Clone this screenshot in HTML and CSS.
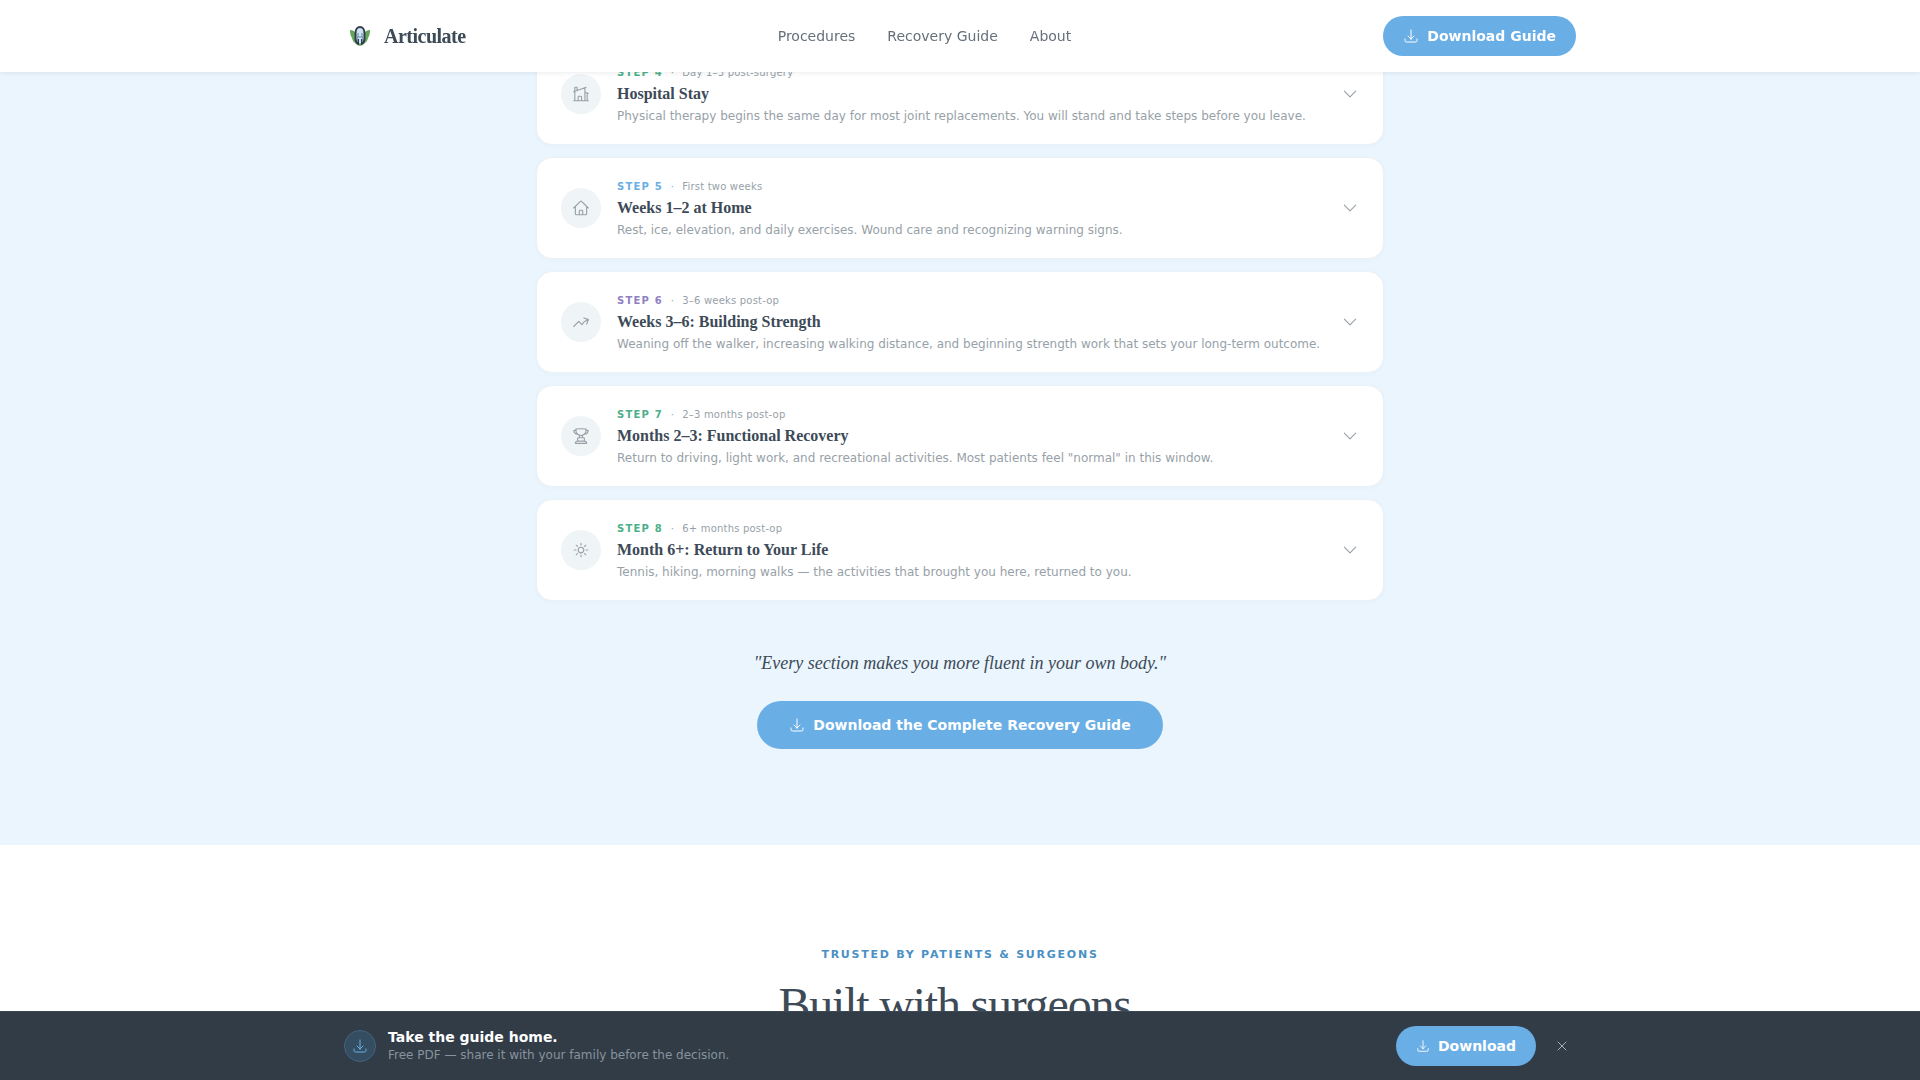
FILE: index.html
```html
<!DOCTYPE html>
<html lang="en">
<head>
<meta charset="utf-8">
<meta name="viewport" content="width=device-width, initial-scale=1">
<title>Articulate</title>
<link rel="stylesheet" href="styles.css">
</head>
<body>
<svg class="sprite" aria-hidden="true">
  <symbol id="download" viewBox="0 0 24 24"><path d="M3 16.5v2.25A2.25 2.25 0 0 0 5.25 21h13.5A2.25 2.25 0 0 0 21 18.75V16.5M16.5 12 12 16.5m0 0L7.5 12m4.5 4.5V3"/></symbol>
  <symbol id="chevron" viewBox="0 0 24 24"><path d="m19.5 8.25-7.5 7.5-7.5-7.5"/></symbol>
</svg>

<header class="site-header">
  <div class="container header-row">
    <a class="brand" href="#">
      <svg class="brand-mark" viewBox="0 0 32 32" aria-hidden="true">
        <path fill="#67a65a" d="M6 10c3 0 5 1.500 6 4l1 10c-3-1-4.500-3-5-6C6.500 16 6 13 6 10Z"/>
        <path fill="#67a65a" d="M26 10c-3 0-5 1.500-6 4l-1 10c3-1 4.500-3 5-6 1.500-2 2-5 2-8Z"/>
        <path fill="#86bd78" d="M10 20c0 3 3 5.500 6 6 3-.5 6-3 6-6l-6 2Z"/>
        <path fill="#cfe3f1" d="M16 7c-3 0-4.500 2.500-4.500 6L13 24h6l1.500-11C20.500 9.500 19 7 16 7Z"/>
        <path fill="none" stroke="#303d4b" stroke-width="2" stroke-linecap="round" d="M14.500 24c-2-1-3-3-3-5v-6c0-3.500 2-6 4.500-6s4.500 2.500 4.500 6v6c0 2-1 4-3 5"/>
        <path fill="none" stroke="#5d87a8" stroke-width="1" d="M14 13v3l-1 2 1 4M18 13v3l1 2-1 4M14 17h4"/>
        <path fill="none" stroke="#303d4b" stroke-width="1" d="M14.500 19v5M17.500 19v5"/>
      </svg>
      <span class="brand-name">Articulate</span>
    </a>
    <nav class="main-nav" aria-label="Main">
      <a href="#">Procedures</a>
      <a href="#">Recovery Guide</a>
      <a href="#">About</a>
    </nav>
    <button class="button" type="button"><svg class="icon icon-16"><use href="#download"/></svg>Download Guide</button>
  </div>
</header>

<main>
  <section class="journey">
    <div class="steps">
      <button class="step" type="button">
        <span class="step-icon"><svg class="icon icon-18" viewBox="0 0 24 24"><path d="M8.250 21v-4.875c0-.621.504-1.125 1.125-1.125h2.250c.621 0 1.125.504 1.125 1.125V21m0 0h4.500V3.545M12.750 21h7.500V10.750M2.250 21h1.500m18 0h-18M2.250 9l4.500-1.636M18.750 3l-1.500.545m0 6.205 3 1m1.500.5-1.500-.5M6.750 7.364V3h-3v18m3-13.636 10.500-3.819"/></svg></span>
        <span class="step-body">
          <span class="step-meta"><b class="green">STEP 4</b><i>·</i><span>Day 1–3 post-surgery</span></span>
          <span class="step-title">Hospital Stay</span>
          <span class="step-text">Physical therapy begins the same day for most joint replacements. You will stand and take steps before you leave.</span>
        </span>
        <svg class="icon icon-18"><use href="#chevron"/></svg>
      </button>
      <button class="step" type="button">
        <span class="step-icon"><svg class="icon icon-18" viewBox="0 0 24 24"><path d="m2.250 12 8.954-8.955c.44-.439 1.152-.439 1.591 0L21.750 12M4.500 9.750v10.125c0 .621.504 1.125 1.125 1.125H9.750v-4.875c0-.621.504-1.125 1.125-1.125h2.250c.621 0 1.125.504 1.125 1.125V21h4.125c.621 0 1.125-.504 1.125-1.125V9.750M8.250 21h8.250"/></svg></span>
        <span class="step-body">
          <span class="step-meta"><b class="blue">STEP 5</b><i>·</i><span>First two weeks</span></span>
          <span class="step-title">Weeks 1–2 at Home</span>
          <span class="step-text">Rest, ice, elevation, and daily exercises. Wound care and recognizing warning signs.</span>
        </span>
        <svg class="icon icon-18"><use href="#chevron"/></svg>
      </button>
      <button class="step" type="button">
        <span class="step-icon"><svg class="icon icon-18" viewBox="0 0 24 24"><path d="M2.250 18 9 11.250l4.306 4.306a11.950 11.950 0 0 1 5.814-5.518l2.740-1.220m0 0-5.940-2.281m5.940 2.280-2.280 5.941"/></svg></span>
        <span class="step-body">
          <span class="step-meta"><b class="purple">STEP 6</b><i>·</i><span>3–6 weeks post-op</span></span>
          <span class="step-title">Weeks 3–6: Building Strength</span>
          <span class="step-text">Weaning off the walker, increasing walking distance, and beginning strength work that sets your long-term outcome.</span>
        </span>
        <svg class="icon icon-18"><use href="#chevron"/></svg>
      </button>
      <button class="step" type="button">
        <span class="step-icon"><svg class="icon icon-18" viewBox="0 0 24 24"><path d="M16.500 18.750h-9m9 0a3 3 0 0 1 3 3h-15a3 3 0 0 1 3-3m9 0v-3.375c0-.621-.503-1.125-1.125-1.125h-.871M7.500 18.750v-3.375c0-.621.504-1.125 1.125-1.125h.872m5.007 0H9.497m5.007 0a7.454 7.454 0 0 1-.982-3.172M9.497 14.250a7.454 7.454 0 0 0 .981-3.172M5.250 4.236c-.982.143-1.954.317-2.916.520A6.003 6.003 0 0 0 7.730 9.728M5.250 4.236V4.500c0 2.108.966 3.990 2.480 5.228M5.250 4.236V2.721C7.456 2.410 9.710 2.250 12 2.250c2.291 0 4.545.160 6.750.470v1.516M7.730 9.728a6.726 6.726 0 0 0 2.748 1.350m8.272-6.842V4.500c0 2.108-.966 3.990-2.480 5.228m2.480-5.492a46.320 46.320 0 0 1 2.916.520 6.003 6.003 0 0 1-5.395 4.972m0 0a6.726 6.726 0 0 1-2.749 1.350m0 0a6.772 6.772 0 0 1-3.044 0"/></svg></span>
        <span class="step-body">
          <span class="step-meta"><b class="green">STEP 7</b><i>·</i><span>2–3 months post-op</span></span>
          <span class="step-title">Months 2–3: Functional Recovery</span>
          <span class="step-text">Return to driving, light work, and recreational activities. Most patients feel "normal" in this window.</span>
        </span>
        <svg class="icon icon-18"><use href="#chevron"/></svg>
      </button>
      <button class="step" type="button">
        <span class="step-icon"><svg class="icon icon-18" viewBox="0 0 24 24"><path d="M12 3v2.250m6.364.386-1.591 1.591M21 12h-2.250m-.386 6.364-1.591-1.591M12 18.750V21m-4.773-4.227-1.591 1.591M5.250 12H3m4.227-4.773L5.636 5.636M15.750 12a3.750 3.750 0 1 1-7.500 0 3.750 3.750 0 0 1 7.500 0Z"/></svg></span>
        <span class="step-body">
          <span class="step-meta"><b class="green">STEP 8</b><i>·</i><span>6+ months post-op</span></span>
          <span class="step-title">Month 6+: Return to Your Life</span>
          <span class="step-text">Tennis, hiking, morning walks — the activities that brought you here, returned to you.</span>
        </span>
        <svg class="icon icon-18"><use href="#chevron"/></svg>
      </button>
    </div>
    <div class="closing">
      <p class="quote">"Every section makes you more fluent in your own body."</p>
      <button class="button button-large" type="button"><svg class="icon icon-16"><use href="#download"/></svg>Download the Complete Recovery Guide</button>
    </div>
  </section>

  <section class="trust">
    <p class="eyebrow">TRUSTED BY PATIENTS &amp; SURGEONS</p>
    <h2 class="trust-title">Built with surgeons,</h2>
  </section>
</main>

<aside class="guide-bar" aria-label="Recovery guide download">
  <div class="container guide-row">
    <span class="guide-icon"><svg class="icon icon-16"><use href="#download"/></svg></span>
    <div class="guide-copy">
      <p class="guide-title">Take the guide home.</p>
      <p class="guide-text">Free PDF — share it with your family before the decision.</p>
    </div>
    <button class="button" type="button"><svg class="icon icon-14"><use href="#download"/></svg>Download</button>
    <button class="close" type="button" aria-label="Close"><svg class="icon icon-16" viewBox="0 0 24 24"><path d="M6 18 18 6M6 6l12 12"/></svg></button>
  </div>
</aside>
</body>
</html>
```
FILE: styles.css
```css
* { box-sizing: border-box; }

body {
  margin: 0;
  background: #fff;
  color: #3d4a57;
  font-family: "DejaVu Sans", sans-serif;
}

p, h2 { margin: 0; }
a { color: inherit; text-decoration: none; }
button { font-family: inherit; cursor: pointer; }

.sprite { display: none; }

.icon {
  flex: none;
  fill: none;
  stroke: currentColor;
  stroke-width: 1.5;
  stroke-linecap: round;
  stroke-linejoin: round;
}
.icon-14 { width: 14px; height: 14px; }
.icon-16 { width: 16px; height: 16px; }
.icon-18 { width: 18px; height: 18px; }

.container {
  max-width: 1280px;
  margin: 0 auto;
  padding: 0 24px;
}

.button {
  display: inline-flex;
  align-items: center;
  gap: 8px;
  height: 40px;
  padding: 0 20px;
  border: 0;
  border-radius: 24px;
  background: #6aaee6;
  color: #fff;
  font-size: 14px;
  font-weight: 700;
}
.button-large { height: 48px; padding: 0 32px; }

/* Header */
.site-header {
  position: fixed;
  inset: 0 0 auto;
  z-index: 2;
  background: #fff;
  box-shadow: 0 1px 4px rgba(61, 74, 87, 0.1);
}
.header-row {
  display: flex;
  align-items: center;
  justify-content: space-between;
  height: 72px;
}
.brand { display: flex; align-items: center; gap: 8px; }
.brand-mark { width: 32px; height: 32px; }
.brand-name {
  font-family: "Liberation Serif", serif;
  font-size: 20px;
  font-weight: 700;
  letter-spacing: -0.025em;
}
.main-nav { display: flex; gap: 32px; color: #66707a; font-size: 14px; }

/* Recovery steps */
.journey { padding: 43px 24px 96px; background: #eaf5fd; }
.steps {
  display: flex;
  flex-direction: column;
  gap: 12px;
  max-width: 848px;
  margin: 0 auto;
}
.step {
  display: flex;
  align-items: center;
  gap: 16px;
  width: 100%;
  min-height: 102px;
  padding: 20px 24px;
  border: 1px solid #eaf2f7;
  border-radius: 16px;
  background: #fff;
  box-shadow: 0 1px 4px rgba(61, 74, 87, 0.03);
  color: #97a1a8;
  text-align: left;
}
.step-icon {
  display: grid;
  flex: none;
  place-items: center;
  width: 40px;
  height: 40px;
  border-radius: 50%;
  background: #eff4f7;
}
.step-body { display: flex; flex: 1; flex-direction: column; min-width: 0; }
.step-meta {
  display: flex;
  align-items: center;
  gap: 8px;
  font-size: 10px;
  letter-spacing: 0.02em;
  line-height: 18px;
}
.step-meta b { letter-spacing: 0.12em; }
.step-meta i { font-style: normal; }
.step-title {
  margin: 2px 0 4px;
  color: #3d4a57;
  font-family: "Liberation Serif", serif;
  font-size: 16px;
  font-weight: 700;
  line-height: 20px;
}
.step-text { font-size: 12px; line-height: 16px; }
.green { color: #4caf87; }
.blue { color: #6aaee6; }
.purple { color: #8f7fc4; }

.closing {
  display: flex;
  flex-direction: column;
  align-items: center;
  gap: 24px;
  padding-top: 48px;
}
.quote {
  font-family: "Liberation Serif", serif;
  font-size: 18px;
  font-style: italic;
  line-height: 28px;
}

/* Trust section */
.trust { padding: 96px 24px 40px; text-align: center; }
.eyebrow {
  color: #4a90c4;
  font-size: 11px;
  font-weight: 700;
  letter-spacing: 0.16em;
  line-height: 28px;
}
.trust-title {
  margin-top: 8px;
  font-family: "Liberation Serif", serif;
  font-size: 48px;
  font-weight: 400;
  letter-spacing: -0.025em;
  line-height: 56px;
}

/* Sticky guide bar */
.guide-bar {
  position: fixed;
  inset: auto 0 0;
  z-index: 2;
  border-top: 1px solid #3b4854;
  background: #313c47;
}
.guide-row { display: flex; align-items: center; gap: 12px; height: 68px; }
.guide-icon {
  display: grid;
  place-items: center;
  width: 32px;
  height: 32px;
  border: 1px solid #45637e;
  border-radius: 50%;
  background: #344d60;
  color: #6aaee6;
}
.guide-copy { flex: 1; }
.guide-title { color: #fff; font-size: 14px; font-weight: 700; line-height: 18px; }
.guide-text { color: #87939d; font-size: 12px; line-height: 18px; }
.close {
  display: grid;
  place-items: center;
  width: 28px;
  height: 28px;
  padding: 0;
  border: 0;
  background: transparent;
  color: #a7b0b8;
}
```
